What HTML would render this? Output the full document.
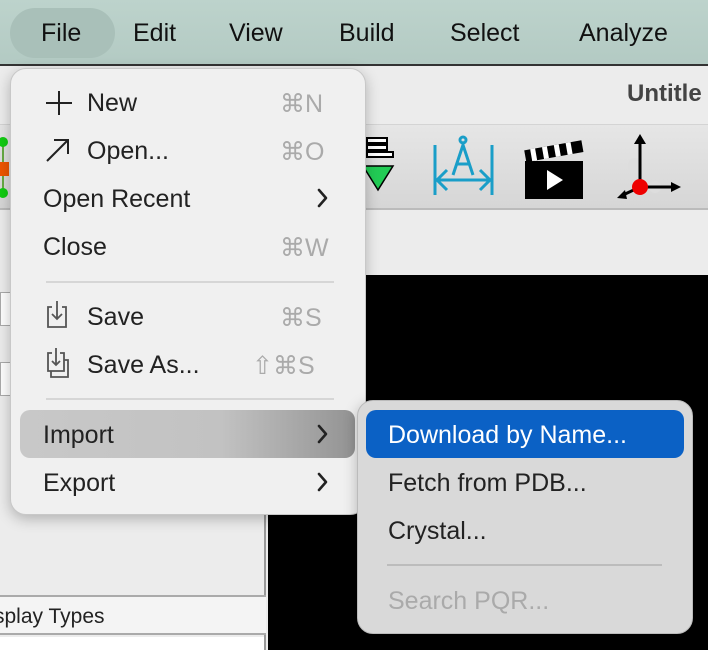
<!DOCTYPE html>
<html><head><style>
*{margin:0;padding:0;box-sizing:border-box}
body{width:708px;height:650px;overflow:hidden;position:relative;font-family:"Liberation Sans",sans-serif;background:#ececec}
.abs{position:absolute}
.mb{left:0;top:0;width:708px;height:66px;background:linear-gradient(#bdd3cc,#b3cac3);border-bottom:2px solid #333}
.mb span{position:absolute;top:19px;font-size:25px;color:#111}
.t{font-size:25px;color:#222;position:absolute;white-space:nowrap}
.sc{color:#aaa;font-size:25px;position:absolute;white-space:nowrap}
.chev{position:absolute;width:12px;height:20px}
</style></head><body>
<div class="abs mb">
 <div class="abs" style="left:10px;top:8px;width:105px;height:50px;border-radius:25px;background:#a9c0b9"></div>
 <span style="left:41px">File</span><span style="left:133px">Edit</span><span style="left:229px">View</span><span style="left:339px">Build</span><span style="left:450px">Select</span><span style="left:579px">Analyze</span>
</div>
<div class="abs" style="left:0;top:68px;width:708px;height:57px;background:#ececec;border-bottom:1px solid #d4d4d4"></div>
<div class="abs" style="left:627px;top:80px;font-size:24px;font-weight:bold;color:#444">Untitle</div>
<div class="abs" style="left:0;top:125px;width:708px;height:85px;background:linear-gradient(#e6e6e6,#d6d6d6);border-bottom:2px solid #bbb"></div>
<svg class="abs" style="left:0;top:130px" width="14" height="75">
 <line x1="3" y1="10" x2="3" y2="62" stroke="#6a4" stroke-width="2"/>
 <circle cx="3" cy="12" r="5" fill="#1c1"/><rect x="0" y="32" width="9" height="14" fill="#e50"/><circle cx="3" cy="63" r="5" fill="#1c1"/>
</svg>
<!-- toolbar icons -->
<svg class="abs" style="left:355px;top:130px" width="340" height="75">
 <g fill="none" stroke="#000" stroke-width="2"><rect x="12" y="8" width="20" height="5" fill="#fff"/><rect x="12" y="15" width="20" height="5" fill="#fff"/><rect x="12" y="22" width="26" height="5" fill="#fff"/></g>
 <polygon points="8,36 38,36 23,60" fill="#22cc55" stroke="#000" stroke-width="1.5"/>
 <g stroke="#1a9ec8" stroke-width="3" fill="none"><line x1="80" y1="15" x2="80" y2="65"/><line x1="137" y1="15" x2="137" y2="65"/><line x1="82" y1="50" x2="135" y2="50"/><polyline points="92,40 82,50 92,60"/><polyline points="125,40 135,50 125,60"/><polyline points="98,45 108,15 118,45"/><circle cx="108" cy="10" r="3"/><line x1="102" y1="34" x2="114" y2="34"/></g>
 <rect x="170" y="31" width="58" height="38" fill="#000"/><polygon points="192,40 192,60 208,50" fill="#fff"/>
 <g transform="rotate(-10 200 22)"><rect x="170" y="15" width="58" height="12" fill="#000"/><g fill="#fff"><rect x="176" y="15" width="5" height="12"/><rect x="188" y="15" width="5" height="12"/><rect x="200" y="15" width="5" height="12"/><rect x="212" y="15" width="5" height="12"/></g></g>
 <circle cx="280" cy="35" r="7" fill="#ddd"/><circle cx="300" cy="57" r="6" fill="#ddd"/>
 <line x1="285" y1="57" x2="285" y2="12" stroke="#000" stroke-width="3"/><polygon points="279,14 291,14 285,4" fill="#000"/>
 <line x1="285" y1="57" x2="318" y2="57" stroke="#000" stroke-width="3"/><polygon points="316,52 326,57 316,62" fill="#000"/>
 <line x1="285" y1="57" x2="268" y2="65" stroke="#000" stroke-width="3"/><polygon points="262,68 270,60 272,69" fill="#000"/>
 <circle cx="285" cy="57" r="8" fill="#e00"/>
</svg>
<!-- left panel -->
<div class="abs" style="left:0;top:210px;width:266px;height:440px;background:#ececec;border-right:2px solid #999"></div>
<div class="abs" style="left:0;top:292px;width:14px;height:34px;background:#fff;border:1px solid #aaa"></div>
<div class="abs" style="left:0;top:362px;width:14px;height:34px;background:#fff;border:1px solid #aaa"></div>
<div class="abs" style="left:0;top:595px;width:266px;height:40px;background:#f4f4f4;border-top:2px solid #aaa;border-bottom:2px solid #aaa"></div>
<div class="abs" style="left:-6px;top:605px;font-size:21px;color:#222">splay Types</div>
<div class="abs" style="left:0;top:637px;width:264px;height:13px;background:#fff"></div>
<!-- black viewer -->
<div class="abs" style="left:268px;top:275px;width:440px;height:375px;background:#000"></div>
<!-- file menu -->
<div class="abs" style="left:10px;top:68px;width:356px;height:447px;border-radius:16px;background:#f0f0f0;border:1px solid #c8c8c8;box-shadow:0 4px 14px rgba(0,0,0,.25)"></div>
<div class="abs" style="left:20px;top:410px;width:335px;height:48px;border-radius:10px;background:linear-gradient(90deg,#c8c8c8,#c2c2c2 60%,#939393)"></div>
<div class="abs" style="left:46px;top:281px;width:288px;height:2px;background:#d6d6d6"></div>
<div class="abs" style="left:46px;top:398px;width:288px;height:2px;background:#d6d6d6"></div>
<svg class="abs" style="left:44px;top:90px" width="30" height="300" fill="none" stroke="#222" stroke-width="2">
 <line x1="2" y1="13" x2="28" y2="13"/><line x1="15" y1="1" x2="15" y2="25"/>
 <line x1="3" y1="71" x2="24" y2="50"/><polyline points="10,50 24,50 24,64"/>
 <g stroke="#555" stroke-width="1.8"><path d="M8 217 H4 V237 H22 V217 H18"/><path d="M13 211 V229 M8 224 L13 229 L18 224"/>
 <path d="M8 263 H4 V281 H20 V263 H16"/><path d="M12 258 V275 M8 271 L12 275 L16 271"/><path d="M7 281 V287 H24 V270 H20"/></g>
</svg>
<div class="t" style="left:87px;top:89px">New</div><div class="sc" style="left:280px;top:89px">⌘N</div>
<div class="t" style="left:87px;top:137px">Open...</div><div class="sc" style="left:280px;top:137px">⌘O</div>
<div class="t" style="left:43px;top:185px">Open Recent</div>
<div class="t" style="left:43px;top:233px">Close</div><div class="sc" style="left:280px;top:233px">⌘W</div>
<div class="t" style="left:87px;top:303px">Save</div><div class="sc" style="left:280px;top:303px">⌘S</div>
<div class="t" style="left:87px;top:351px">Save As...</div><div class="sc" style="left:252px;top:351px">⇧⌘S</div>
<div class="t" style="left:43px;top:421px">Import</div>
<div class="t" style="left:43px;top:469px">Export</div>
<svg class="abs" style="left:316px;top:0" width="14" height="500" fill="none" stroke="#222" stroke-width="2.6" stroke-linecap="round" stroke-linejoin="round">
 <polyline points="3,190 10,198 3,206"/><polyline points="3,426 10,434 3,442"/><polyline points="3,474 10,482 3,490"/>
</svg>
<!-- submenu -->
<div class="abs" style="left:357px;top:400px;width:336px;height:234px;border-radius:16px;background:#d9d9d9;border:1px solid #bbb;box-shadow:0 4px 14px rgba(0,0,0,.25)"></div>
<div class="abs" style="left:366px;top:410px;width:318px;height:48px;border-radius:10px;background:#0b61c5"></div>
<div class="t" style="left:388px;top:421px;color:#fff">Download by Name...</div>
<div class="t" style="left:388px;top:469px">Fetch from PDB...</div>
<div class="t" style="left:388px;top:517px">Crystal...</div>
<div class="abs" style="left:387px;top:564px;width:275px;height:2px;background:#bcbcbc"></div>
<div class="t" style="left:388px;top:587px;color:#aaa">Search PQR...</div>
</body></html>
